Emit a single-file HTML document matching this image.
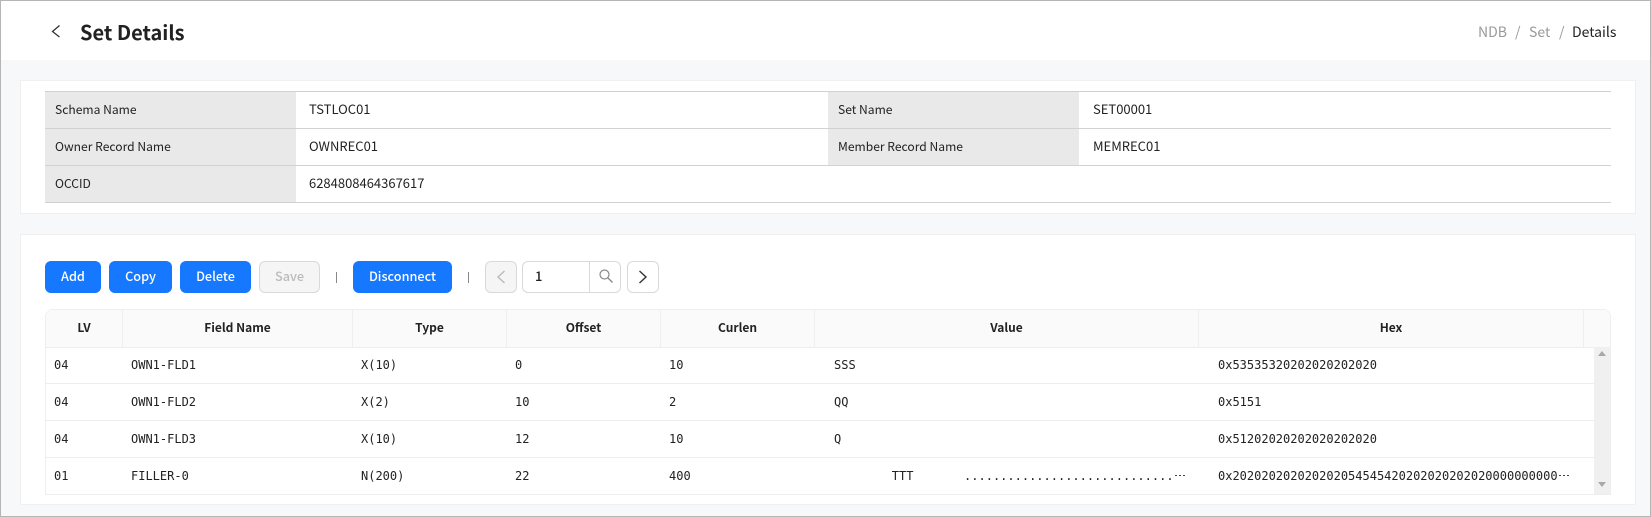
<!DOCTYPE html>
<html lang="en"><head><meta charset="utf-8"><title>Set Details</title>
<style>
*{box-sizing:border-box}
html,body{margin:0;padding:0}
body{width:1651px;height:517px;overflow:hidden;background:#f7f8fa;position:relative;font-family:"Liberation Sans","Noto Sans CJK KR",sans-serif;color:#222}
.s,.a{position:absolute}
.s{font-family:"Noto Sans CJK KR","Liberation Sans",sans-serif;white-space:pre;line-height:20px}
.lb{font-size:12.1px}
.vv{font-size:13px;margin-top:-1px}
.m{position:absolute;font-family:"DejaVu Sans Mono","Liberation Mono",monospace;font-size:12px;line-height:16px;white-space:pre;color:#222}
.btn{position:absolute;top:261px;height:32px;border-radius:6px;background:#1677ff;color:#fff;font:500 12.7px/30px "Noto Sans CJK KR",sans-serif;text-align:center}
.th{position:absolute;top:318px;font:700 12px/20px "Noto Sans CJK KR",sans-serif;text-align:center;color:#222}
.l{position:absolute;background:#d2d2d2;height:1px;left:45px;width:1566px}
.rl{position:absolute;background:#ededed;height:1px;left:45px;width:1549px}
.vl{position:absolute;background:#efefef;width:1px;top:310px;height:37px}
.d{position:absolute;width:2px;height:1px;background:#444;top:475px}
</style></head><body>
<div class="a" style="left:0;top:0;width:1651px;height:60px;background:#fff"></div>
<svg class="a" style="left:49px;top:23px" width="14" height="16" viewBox="0 0 14 16"><path d="M10.5 2.5 L3.5 8.5 L10.5 14" fill="none" stroke="#333" stroke-width="1.3"/></svg>
<div class="s" style="left:80px;top:17px;font-size:20px;font-weight:700;line-height:30px;color:#222">Set Details</div>
<div class="s" style="left:1478px;top:22px;font-size:14px;color:#999">NDB</div>
<div class="s" style="left:1515px;top:22px;font-size:14px;color:#999">/</div>
<div class="s" style="left:1529px;top:22px;font-size:14px;color:#999">Set</div>
<div class="s" style="left:1559px;top:22px;font-size:14px;color:#999">/</div>
<div class="s" style="left:1572px;top:22px;font-size:14px;color:#222">Details</div>

<div class="a" style="left:20px;top:80px;width:1616px;height:134px;background:#fff;border:1px solid #f0f0f0"></div>
<div class="a" style="left:45px;top:91px;width:251px;height:111px;background:#e9e9e9"></div>
<div class="a" style="left:828px;top:91px;width:251px;height:74px;background:#e9e9e9"></div>
<div class="l" style="top:91px"></div><div class="l" style="top:128px"></div><div class="l" style="top:165px"></div><div class="l" style="top:202px"></div>
<div class="s lb" style="left:55px;top:100px">Schema Name</div>
<div class="s vv" style="left:309px;top:100px">TSTLOC01</div>
<div class="s lb" style="left:838px;top:100px">Set Name</div>
<div class="s vv" style="left:1093px;top:100px">SET00001</div>
<div class="s lb" style="left:55px;top:137px">Owner Record Name</div>
<div class="s vv" style="left:309px;top:137px">OWNREC01</div>
<div class="s lb" style="left:838px;top:137px">Member Record Name</div>
<div class="s vv" style="left:1093px;top:137px">MEMREC01</div>
<div class="s lb" style="left:55px;top:174px">OCCID</div>
<div class="s vv" style="left:309px;top:174px">6284808464367617</div>

<div class="a" style="left:20px;top:234px;width:1616px;height:271px;background:#fff;border:1px solid #f0f0f0"></div>
<div class="btn" style="left:45px;width:56px">Add</div>
<div class="btn" style="left:109px;width:63px">Copy</div>
<div class="btn" style="left:180px;width:71px">Delete</div>
<div class="btn" style="left:259px;width:61px;background:#f5f5f5;border:1px solid #d9d9d9;color:#bbb;line-height:28px">Save</div>
<div class="a" style="left:336px;top:272px;width:1px;height:11px;background:#888"></div>
<div class="btn" style="left:353px;width:99px">Disconnect</div>
<div class="a" style="left:468px;top:272px;width:1px;height:11px;background:#888"></div>
<div class="a" style="left:485px;top:261px;width:32px;height:32px;border:1px solid #d9d9d9;border-radius:6px;background:#f5f5f5"></div>
<svg class="a" style="left:494px;top:269px" width="14" height="16" viewBox="0 0 14 16"><path d="M10.5 2 L4 8 L10.5 14" fill="none" stroke="#bbb" stroke-width="1.4"/></svg>
<div class="a" style="left:522px;top:261px;width:99px;height:32px;border:1px solid #d9d9d9;border-radius:6px;background:#fff"></div>
<div class="a" style="left:589px;top:262px;width:1px;height:30px;background:#d9d9d9"></div>
<div class="s" style="left:535px;top:266px;font-size:13px;font-weight:500">1</div>
<svg class="a" style="left:598px;top:268px" width="16" height="16" viewBox="0 0 16 16"><circle cx="6.5" cy="6.5" r="4.5" fill="none" stroke="#888" stroke-width="1.2"/><path d="M10 10 L14.5 14.5" stroke="#888" stroke-width="1.3"/></svg>
<div class="a" style="left:627px;top:261px;width:32px;height:32px;border:1px solid #d9d9d9;border-radius:6px;background:#fff"></div>
<svg class="a" style="left:636px;top:269px" width="14" height="16" viewBox="0 0 14 16"><path d="M3.5 2 L10 8 L3.5 14" fill="none" stroke="#333" stroke-width="1.4"/></svg>

<div class="a" style="left:45px;top:309px;width:1566px;height:186px;border:1px solid #efefef;border-top-left-radius:8px;border-top-right-radius:8px;border-bottom:0"></div>
<div class="a" style="left:46px;top:310px;width:1564px;height:37px;background:#fafafa;border-top-left-radius:8px;border-top-right-radius:8px"></div>
<div class="a" style="left:1594px;top:347px;width:16px;height:148px;background:#f0f0f0"></div>
<div class="vl" style="left:122px"></div><div class="vl" style="left:352px"></div><div class="vl" style="left:506px"></div><div class="vl" style="left:660px"></div><div class="vl" style="left:814px"></div><div class="vl" style="left:1198px"></div><div class="vl" style="left:1583px"></div>
<div class="th" style="left:45px;width:78px">LV</div>
<div class="th" style="left:123px;width:229px">Field Name</div>
<div class="th" style="left:353px;width:153px">Type</div>
<div class="th" style="left:507px;width:153px">Offset</div>
<div class="th" style="left:661px;width:153px">Curlen</div>
<div class="th" style="left:815px;width:383px">Value</div>
<div class="th" style="left:1199px;width:384px">Hex</div>
<div class="rl" style="top:347px"></div><div class="rl" style="top:383px"></div><div class="rl" style="top:420px"></div><div class="rl" style="top:457px"></div><div class="rl" style="top:494px;width:1566px"></div>
<svg class="a" style="left:1597px;top:350px" width="10" height="8"><path d="M5 1 L9 6 L1 6Z" fill="#a8a8a8"/></svg>
<svg class="a" style="left:1597px;top:481px" width="10" height="8"><path d="M1 1 L9 1 L5 6Z" fill="#a8a8a8"/></svg>

<div class="m" style="left:54px;top:357px">04</div><div class="m" style="left:131px;top:357px">OWN1-FLD1</div><div class="m" style="left:361px;top:357px">X(10)</div><div class="m" style="left:515px;top:357px">0</div><div class="m" style="left:669px;top:357px">10</div><div class="m" style="left:834px;top:357px">SSS</div><div class="m" style="left:1218px;top:357px">0x53535320202020202020</div>
<div class="m" style="left:54px;top:394px">04</div><div class="m" style="left:131px;top:394px">OWN1-FLD2</div><div class="m" style="left:361px;top:394px">X(2)</div><div class="m" style="left:515px;top:394px">10</div><div class="m" style="left:669px;top:394px">2</div><div class="m" style="left:834px;top:394px">QQ</div><div class="m" style="left:1218px;top:394px">0x5151</div>
<div class="m" style="left:54px;top:431px">04</div><div class="m" style="left:131px;top:431px">OWN1-FLD3</div><div class="m" style="left:361px;top:431px">X(10)</div><div class="m" style="left:515px;top:431px">12</div><div class="m" style="left:669px;top:431px">10</div><div class="m" style="left:834px;top:431px">Q</div><div class="m" style="left:1218px;top:431px">0x51202020202020202020</div>
<div class="m" style="left:54px;top:468px">01</div><div class="m" style="left:131px;top:468px">FILLER-0</div><div class="m" style="left:361px;top:468px">N(200)</div><div class="m" style="left:515px;top:468px">22</div><div class="m" style="left:669px;top:468px">400</div>
<div class="m" style="left:834px;top:468px">        TTT       .............................</div>
<div class="d" style="left:1175px"></div><div class="d" style="left:1179px"></div><div class="d" style="left:1183px"></div>
<div class="m" style="left:1218px;top:468px">0x202020202020202054545420202020202020000000000</div>
<div class="d" style="left:1559px"></div><div class="d" style="left:1563px"></div><div class="d" style="left:1567px"></div>

<div class="a" style="left:0;top:0;width:1651px;height:517px;border:1px solid #b5b5b5"></div>
</body></html>
